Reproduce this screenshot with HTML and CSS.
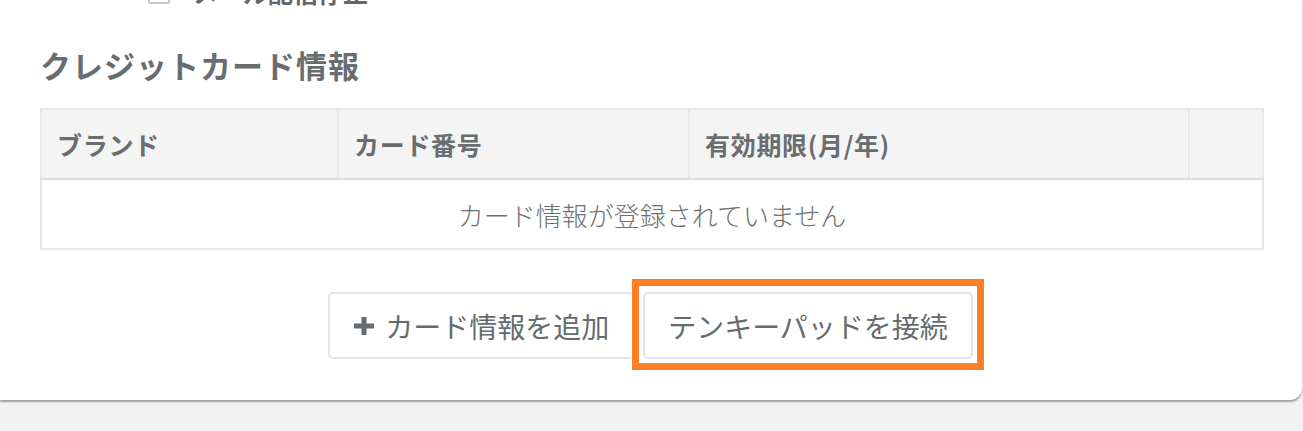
FILE: index.html
```html
<!DOCTYPE html>
<html lang="ja">
<head>
<meta charset="utf-8">
<link rel="stylesheet" href="styles.css">
</head>
<body>
<div class="card">
  <div class="optout">
    <span class="checkbox"></span>
    <span class="optout-label">メール配信停止</span>
  </div>
  <h3 class="title">クレジットカード情報</h3>
  <table class="cards">
    <colgroup>
      <col class="c1"><col class="c2"><col class="c3"><col class="c4">
    </colgroup>
    <thead>
      <tr>
        <th>ブランド</th>
        <th>カード番号</th>
        <th>有効期限(月/年)</th>
        <th></th>
      </tr>
    </thead>
    <tbody>
      <tr>
        <td class="empty" colspan="4">カード情報が登録されていません</td>
      </tr>
    </tbody>
  </table>
  <div class="actions">
    <button class="btn" type="button"><svg class="plus" viewBox="0 0 22 20" width="22" height="20"><path d="M8.5 1h5v6.5h7.5v5h-7.5v6.5h-5v-6.5h-7.5v-5h7.5z" fill="#666b70"/></svg>カード情報を追加</button>
    <button class="btn highlighted" type="button">テンキーパッドを接続</button>
  </div>
</div>
</body>
</html>
```

FILE: styles.css
```css
html, body {
  margin: 0;
  padding: 0;
}
body {
  background: #f2f2f2;
  font-family: "Noto Sans CJK JP", "Noto Sans", sans-serif;
  color: #666;
  height: 431px;
  overflow: hidden;
}
.card {
  background: #fff;
  width: 1302px;
  height: 400px;
  border-radius: 0 0 12px 0;
  box-shadow: 0 2px 2px rgba(0, 0, 0, 0.35);
  box-sizing: border-box;
  padding: 0 41px 0 40px;
}
.optout {
  display: flex;
  align-items: flex-end;
  height: 4px;
  padding-left: 108px;
}
.checkbox {
  width: 18px;
  height: 18px;
  border: 2px solid #c8c8c8;
  border-radius: 2px;
  flex: none;
}
.optout-label {
  font-size: 25px;
  font-weight: bold;
  line-height: 30px;
  margin-left: 23px;
  margin-bottom: -3px;
  color: #666;
  white-space: nowrap;
}
.title {
  margin: 0;
  padding-top: 41px;
  font-size: 31px;
  letter-spacing: 1px;
  line-height: 40px;
  font-weight: bold;
  color: #6a6d70;
  height: 63px;
}
.cards {
  width: 1222px;
  border-collapse: collapse;
  table-layout: fixed;
  border: 2px solid #e8e8e8;
}
.c1 { width: 297px; }
.c2 { width: 351px; }
.c3 { width: 500px; }
.c4 { width: 74px; }
.cards th {
  background: #f4f4f4;
  height: 70px;
  padding: 0 0 0 15px;
  box-sizing: border-box;
  text-align: left;
  font-size: 25px;
  letter-spacing: 0.7px;
  font-weight: bold;
  color: #6a6d70;
  border-left: 2px solid #e8e8e8;
  border-bottom: 2px solid #dcdcdc;
}
.cards th:first-child { border-left: 0; }
.cards td.empty {
  height: 68px;
  text-align: center;
  font-size: 26px;
  font-weight: 300;
  color: #707070;
  padding: 0;
}
.actions {
  display: flex;
  justify-content: center;
  gap: 9px;
  margin-top: 42px;
}
.btn {
  position: relative;
  display: inline-flex;
  align-items: center;
  gap: 10px;
  height: 67px;
  box-sizing: border-box;
  padding: 0 23px;
  background: #fff;
  border: 2px solid #e3e6e9;
  border-radius: 5px;
  font-family: inherit;
  font-size: 28px;
  color: #666b70;
}
.plus { flex: none; }
.highlighted::after {
  content: "";
  position: absolute;
  top: -15px;
  left: -13px;
  right: -13px;
  bottom: -13px;
  border: 7px solid #fd7e26;
  pointer-events: none;
}
```
